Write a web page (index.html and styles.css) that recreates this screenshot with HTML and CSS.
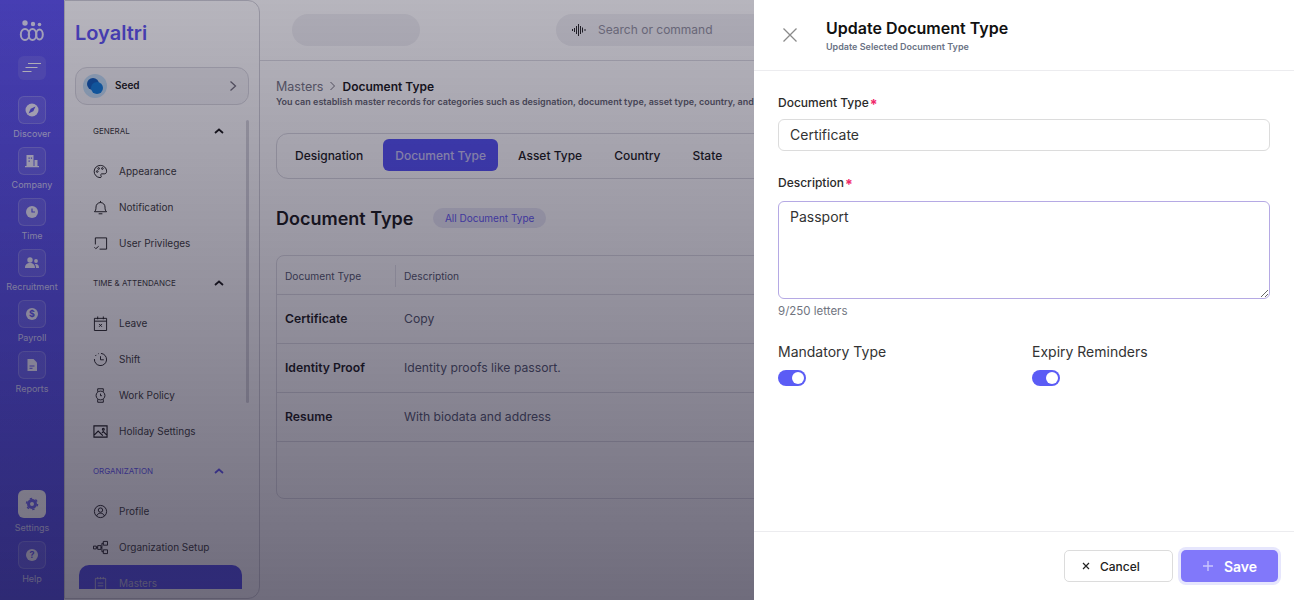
FILE: index.html
```html
<!DOCTYPE html>
<html lang="en">
  <head>
    <meta charset="UTF-8" />
    <meta name="viewport" content="width=device-width, initial-scale=1.0" />
    <title>Loyaltri</title>
    <link rel="stylesheet" href="styles.css">
  </head>
  <body>
    <div class="app">
      <!-- Icon rail -->
      <aside class="rail">
        <svg class="rail-logo" width="26" height="22" viewBox="0 0 26 22" fill="none" stroke="#fff" stroke-width="2">
          <ellipse cx="6" cy="14.5" rx="4.2" ry="5.5"/><ellipse cx="13.5" cy="14.5" rx="3.8" ry="5.5"/><ellipse cx="20.5" cy="14.5" rx="3.3" ry="5"/>
          <circle cx="6" cy="3" r="2.7" fill="#fff" stroke="none"/><circle cx="14" cy="4" r="2.2" fill="#fff" stroke="none"/><circle cx="20.5" cy="4.5" r="1.8" fill="#fff" stroke="none"/>
        </svg>
        <div class="rail-toggle">
          <svg width="20" height="12" viewBox="0 0 20 12" stroke="#fff" stroke-width="1"><path d="M6 1.5h13M3.500 5.500h12M0.500 9.500h9"/></svg>
        </div>
        <a class="rail-item">
          <span class="rail-icon"><svg width="14" height="14" viewBox="0 0 14 14"><circle cx="7" cy="7" r="6.500" fill="#fff"/><path d="M10.500 3.500 8.300 8.300 3.500 10.500 5.700 5.700z" fill="#5a50f0"/></svg></span>
          Discover
        </a>
        <a class="rail-item">
          <span class="rail-icon"><svg width="14" height="14" viewBox="0 0 14 14" fill="#fff"><path d="M1.500 1h7v11h-7zM9.500 6h3v6h-3zM0 12h14v1.300H0z"/><path d="M3.500 3.500h1.300v1.300H3.500zM5.800 3.500h1.300v1.300H5.800zM3.500 6.500h1.300v1.300H3.500z" fill="#5a50f0"/></svg></span>
          Company
        </a>
        <a class="rail-item">
          <span class="rail-icon"><svg width="14" height="14" viewBox="0 0 14 14"><circle cx="7" cy="7" r="6" fill="#fff"/><path d="M7 3.500V7h3" fill="none" stroke="#5a50f0" stroke-width="1.200"/></svg></span>
          Time
        </a>
        <a class="rail-item">
          <span class="rail-icon"><svg width="14" height="14" viewBox="0 0 14 14" fill="#fff"><circle cx="5" cy="4" r="2.700"/><circle cx="11" cy="5" r="1.900"/><path d="M0 12c0-3.500 2-5 5-5s5 1.500 5 5zM10.800 8c2 0 3.200 1 3.200 4h-3c0-1.500-.3-3-1.200-3.700z"/></svg></span>
          Recruitment
        </a>
        <a class="rail-item">
          <span class="rail-icon"><svg width="14" height="14" viewBox="0 0 14 14"><circle cx="7" cy="7" r="6" fill="#fff"/><text x="7" y="10" text-anchor="middle" class="rail-dollar">$</text></svg></span>
          Payroll
        </a>
        <a class="rail-item">
          <span class="rail-icon"><svg width="14" height="14" viewBox="0 0 14 14"><path d="M2.500 1h6l3.500 3.500V13H2.500z" fill="#fff"/><path d="M4.500 8h5M4.500 10.300h3" stroke="#5a50f0" stroke-width="1"/></svg></span>
          Reports
        </a>
        <a class="rail-item rail-settings">
          <span class="rail-icon"><svg width="14" height="14" viewBox="0 0 14 14"><circle cx="7" cy="7" r="3.500" fill="none" stroke="#5a50f0" stroke-width="3"/><circle cx="7" cy="7" r="5.500" fill="none" stroke="#5a50f0" stroke-width="1.500" stroke-dasharray="2.400 3.360"/></svg></span>
          Settings
        </a>
        <a class="rail-item">
          <span class="rail-icon"><svg width="14" height="14" viewBox="0 0 14 14"><circle cx="7" cy="7" r="6" fill="#fff"/><text x="7" y="10" text-anchor="middle" class="rail-dollar">?</text></svg></span>
          Help
        </a>
      </aside>

      <!-- Sidebar -->
      <aside class="sidebar">
        <h1 class="brand">Loyaltri</h1>
        <div class="org-card">
          <span class="org-avatar"><i class="dot-a"></i><i class="dot-b"></i></span>
          <span class="org-name">Seed</span>
          <svg width="8" height="12" viewBox="0 0 8 12" fill="none" stroke="#6f6d78" stroke-width="1.300"><path d="M1.500 1.500 6.500 6l-5 4.500"/></svg>
        </div>
        <div class="menu">
          <div class="menu-scrollbar"></div>
          <div class="menu-head"><span>General</span><svg class="caret" width="10" height="6" viewBox="0 0 10 6" fill="none" stroke="currentColor" stroke-width="1.800"><path d="M1 5l4-3.500L9 5"/></svg></div>
          <a class="menu-item">
            <svg viewBox="0 0 16 16" fill="none" stroke="#111" stroke-width="1"><path d="M8 1.500a6.500 6.500 0 1 0-.5 13c1.500 0 1.600-1.200 1-2-.7-1 0-2 1-2h2.500c1.600 0 2.500-1 2.500-2.700 0-3.500-3-6.300-6.500-6.300z"/><circle cx="4.500" cy="8" r=".9"/><circle cx="6" cy="4.800" r=".9"/><circle cx="10" cy="4.800" r=".9"/></svg>
            Appearance
          </a>
          <a class="menu-item">
            <svg viewBox="0 0 16 16" fill="none" stroke="#111" stroke-width="1"><path d="M1.500 12.500c1.200-1 1.700-2 1.700-5a4.800 4.800 0 0 1 9.600 0c0 3 .5 4 1.700 5zM6 14.700h4M8 1v1.700"/></svg>
            Notification
          </a>
          <a class="menu-item">
            <svg viewBox="0 0 16 16" fill="none" stroke="#111" stroke-width="1"><path d="M2.500 9V2h12v12H7M1.500 12l1.500 1.500L6 11"/></svg>
            User Privileges
          </a>
          <div class="menu-head"><span>Time &amp; Attendance</span><svg class="caret" width="10" height="6" viewBox="0 0 10 6" fill="none" stroke="currentColor" stroke-width="1.800"><path d="M1 5l4-3.500L9 5"/></svg></div>
          <a class="menu-item">
            <svg viewBox="0 0 16 16" fill="none" stroke="#111" stroke-width="1"><path d="M1.500 2.500h13v13h-13zM1.500 5.500h13M5 .5v3M11 .5v3M6.500 8.500l3 3M9.500 8.500l-3 3"/></svg>
            Leave
          </a>
          <a class="menu-item">
            <svg viewBox="0 0 16 16" fill="none" stroke="#111" stroke-width="1"><path d="M8.500 1.500a6.500 6.500 0 1 1-7 6M2.500 4.200l1-1.100M5.300 2l.7-.3M8 4.500v3.800h3.500"/></svg>
            Shift
          </a>
          <a class="menu-item">
            <svg viewBox="0 0 16 16" fill="none" stroke="#111" stroke-width="1"><circle cx="8" cy="8" r="4.700"/><path d="M5 4V.8h6V4M5 12v3.200h6V12M8 6v2.200h1.500"/></svg>
            Work Policy
          </a>
          <a class="menu-item">
            <svg viewBox="0 0 16 16" fill="none" stroke="#111" stroke-width="1.200"><path d="M1 2h14v12H1zM1.500 11.500l4-4 5 5M9.500 9.500 11 8l3.500 3.500"/><circle cx="11" cy="5.500" r="1"/></svg>
            Holiday Settings
          </a>
          <div class="menu-head menu-head-active"><span>Organization</span><svg class="caret" width="10" height="6" viewBox="0 0 10 6" fill="none" stroke="currentColor" stroke-width="1.800"><path d="M1 5l4-3.500L9 5"/></svg></div>
          <a class="menu-item">
            <svg viewBox="0 0 16 16" fill="none" stroke="#111" stroke-width="1"><circle cx="8" cy="8" r="6.500"/><circle cx="8" cy="6.500" r="2.300"/><path d="M3.800 12.800c.6-2 2.300-3 4.200-3s3.600 1 4.200 3"/></svg>
            Profile
          </a>
          <a class="menu-item">
            <svg viewBox="0 0 16 16" fill="none" stroke="#111" stroke-width="1"><path d="M.5 6.500h3v3h-3zM5 6h3.500v4H5zM11 1.500h4.500v4H11zM11 10.500h4.500v4H11zM3.500 8H5M8.500 8h1V3.500H11M9.500 8v4.500H11"/></svg>
            Organization Setup
          </a>
          <a class="menu-item menu-item-active">
            <svg viewBox="0 0 16 16" fill="none" stroke="#b9b6d8" stroke-width="1"><path d="M2.500 2.500h11v12h-11zM5 1v2.500M8 1v2.500M11 1v2.500M5 7.500h6M5 10.500h6"/></svg>
            Masters
          </a>
        </div>
      </aside>

      <!-- Main -->
      <main class="main">
        <div class="topbar">
          <div class="top-pill"></div>
          <div class="search">
            <svg width="14" height="12" viewBox="0 0 14 12" stroke="#222" stroke-width="1" fill="none"><path d="M.5 5v2M2.500 4v4M4.500 2v8M6.500 0v12M8.500 2v8M10.500 3.500v5M13 5v2"/></svg>
            <span>Search or command</span>
          </div>
        </div>
        <div class="content">
          <div class="crumbs">
            <span class="crumb-parent">Masters</span>
            <svg width="7" height="10" viewBox="0 0 7 10" fill="none" stroke="#6f6d78" stroke-width="1"><path d="M1.500 1 5.500 5l-4 4"/></svg>
            <span class="crumb-current">Document Type</span>
          </div>
          <p class="page-sub">You can establish master records for categories such as designation, document type, asset type, country, and state.</p>

          <div class="tabs">
            <a class="tab">Designation</a>
            <a class="tab tab-active">Document Type</a>
            <a class="tab">Asset Type</a>
            <a class="tab">Country</a>
            <a class="tab">State</a>
          </div>

          <div class="section-head">
            <h2>Document Type</h2>
            <span class="chip">All Document Type</span>
          </div>

          <div class="table">
            <div class="row row-head">
              <div class="cell-name">Document Type</div>
              <div class="cell-desc">Description</div>
            </div>
            <div class="row">
              <div class="cell-name">Certificate</div>
              <div class="cell-desc">Copy</div>
            </div>
            <div class="row">
              <div class="cell-name">Identity Proof</div>
              <div class="cell-desc">Identity proofs like passort.</div>
            </div>
            <div class="row">
              <div class="cell-name">Resume</div>
              <div class="cell-desc">With biodata and address</div>
            </div>
          </div>
        </div>
      </main>
    </div>

    <!-- Dim layer under the drawer -->
    <div class="backdrop"></div>

    <!-- Drawer -->
    <section class="drawer">
      <header class="drawer-head">
        <svg class="drawer-close" width="16" height="16" viewBox="0 0 16 16" stroke="#8a8a8a" stroke-width="1.300"><path d="M1.500 1.500l13 13M14.500 1.500l-13 13"/></svg>
        <div>
          <h2>Update Document Type</h2>
          <p>Update Selected Document Type</p>
        </div>
      </header>

      <form class="drawer-body">
        <label class="field-label">Document Type<span class="req">*</span></label>
        <input class="field-input" type="text" value="Certificate" />

        <label class="field-label field-label-second">Description<span class="req">*</span></label>
        <textarea class="field-area">Passport</textarea>
        <div class="counter">9/250 letters</div>

        <div class="switches">
          <div class="switch-col">
            <span>Mandatory Type</span>
            <span class="switch"><i></i></span>
          </div>
          <div class="switch-col">
            <span>Expiry Reminders</span>
            <span class="switch"><i></i></span>
          </div>
        </div>
      </form>

      <footer class="drawer-foot">
        <button class="btn btn-cancel" type="button">
          <svg width="8" height="8" viewBox="0 0 8 8" stroke="#222" stroke-width="1.200"><path d="M1 1l6 6M7 1 1 7"/></svg>
          Cancel
        </button>
        <button class="btn btn-save" type="button">
          <svg width="12" height="12" viewBox="0 0 12 12" stroke="#c9c5fd" stroke-width="1.400"><path d="M6 1v10M1 6h10"/></svg>
          Save
        </button>
      </footer>
    </section>
  </body>
</html>
```

FILE: styles.css
```css
* {
  box-sizing: border-box;
}

html,
body {
  margin: 0;
  height: 600px;
  overflow: hidden;
}

body {
  font-family: Inter, "Liberation Sans", sans-serif;
  color: #111;
  background: #fff;
}

h1,
h2,
p {
  margin: 0;
}

.app {
  display: flex;
  height: 600px;
  background: #fff;
}

/* Icon rail */
.rail {
  width: 64px;
  flex: none;
  display: flex;
  flex-direction: column;
  align-items: center;
  padding-top: 20px;
  color: #fff;
  background: linear-gradient(180deg, #5a50f0, #4c48e8);
}

.rail-logo {
  display: block;
  opacity: 0.85;
}

.rail-toggle {
  width: 28px;
  height: 24px;
  margin: 14px 0 16px;
  border-radius: 6px;
  background: rgba(255, 255, 255, 0.1);
  display: flex;
  align-items: center;
  justify-content: center;
}

.rail-item {
  height: 51px;
  display: flex;
  flex-direction: column;
  align-items: center;
  font-size: 9px;
  line-height: 11px;
  color: rgba(255, 255, 255, 0.75);
  white-space: nowrap;
}

.rail-icon {
  width: 28px;
  height: 28px;
  margin-bottom: 4px;
  border: 1px solid rgba(255, 255, 255, 0.2);
  border-radius: 6px;
  background: rgba(255, 255, 255, 0.1);
  display: flex;
  align-items: center;
  justify-content: center;
}

.rail-icon svg {
  opacity: 0.9;
}

.rail-dollar {
  font-size: 9px;
  font-weight: 700;
  fill: #5a50f0;
}

.rail-settings {
  margin-top: auto;
}

.rail-settings .rail-icon {
  background: #fff;
}

.rail-settings + .rail-item {
  margin-bottom: 8px;
}

/* Sidebar */
.sidebar {
  width: 196px;
  flex: none;
  height: 599px;
  background: #fff;
  border: 1px solid #cfcfd6;
  border-radius: 0 12px 12px 0;
  padding: 19px 10px 9px 10px;
  display: flex;
  flex-direction: column;
}

.brand {
  font-size: 20px;
  line-height: 26px;
  font-weight: 600;
  color: #5a50f0;
}

.org-card {
  margin-top: 21px;
  height: 38px;
  width: 174px;
  flex: none;
  display: flex;
  align-items: center;
  padding: 0 11px 0 7px;
  border: 1px solid #d8d8de;
  border-radius: 12px;
  background: #f6f6f8;
}

.org-avatar {
  position: relative;
  width: 24px;
  height: 24px;
  border-radius: 50%;
  background: #bfdcf2;
}

.org-avatar i {
  position: absolute;
  width: 12px;
  height: 12px;
  border-radius: 50%;
}

.dot-a {
  left: 4px;
  top: 4px;
  background: #0a58b8;
}

.dot-b {
  left: 8px;
  top: 8px;
  background: #0a78d8;
}

.org-name {
  flex: 1;
  margin: 0 0 2px 8px;
  font-size: 10px;
  font-weight: 600;
}

.menu {
  position: relative;
  flex: 1;
  overflow: hidden;
  margin-top: 8px;
  padding: 0 4px;
}

.menu-scrollbar {
  position: absolute;
  right: 0;
  top: 7px;
  width: 3px;
  height: 283px;
  background: #d4d4da;
  border-radius: 2px;
}

.menu-head {
  height: 36px;
  display: flex;
  align-items: center;
  justify-content: space-between;
  padding: 0 21px 0 14px;
  font-size: 8px;
  text-transform: uppercase;
  color: #333;
}

.menu-head-active {
  color: #5a50f0;
}

.caret {
  color: #111;
}

.menu-head-active .caret {
  color: #5a50f0;
}

.menu-item {
  height: 36px;
  display: flex;
  align-items: center;
  gap: 11px;
  padding-left: 14px;
  font-size: 10px;
  color: #333;
}

.menu-item svg {
  width: 15px;
  height: 15px;
  flex: none;
}

.menu-head + .menu-item {
  margin-top: 4px;
}

.menu-item + .menu-head {
  margin-top: 4px;
}

.menu-item-active {
  width: 163px;
  border-radius: 10px;
  background: #4c48e8;
  color: #b9b6d8;
}

/* Main */
.main {
  flex: 1;
  min-width: 0;
  background: #fff;
  overflow: hidden;
}

.topbar {
  height: 61px;
  display: flex;
  align-items: center;
  gap: 136px;
  padding: 0 0 1px 32px;
  border-bottom: 1px solid #dcdce2;
}

.top-pill {
  width: 128px;
  height: 32px;
  flex: none;
  border-radius: 16px;
  background: #f0f0f3;
}

.search {
  width: 400px;
  height: 32px;
  flex: none;
  display: flex;
  align-items: center;
  gap: 12px;
  padding-left: 16px;
  border-radius: 16px;
  background: #f0f0f3;
  font-size: 12px;
  color: #8f8f9b;
}

.content {
  padding: 17px 0 0 16px;
}

.crumbs {
  display: flex;
  align-items: center;
  gap: 6px;
  height: 16px;
  font-size: 12.500px;
  white-space: nowrap;
}

.crumb-parent {
  color: #71717d;
}

.crumb-current {
  font-size: 12px;
  font-weight: 600;
}

.page-sub {
  margin-top: 1px;
  font-size: 9px;
  line-height: 14px;
  font-weight: 600;
  color: #60606c;
  white-space: nowrap;
}

.tabs {
  margin-top: 24px;
  width: 700px;
  height: 46px;
  display: flex;
  align-items: center;
  gap: 8px;
  padding: 0 6px 2px 6px;
  border: 1px solid #d8d8de;
  border-radius: 12px;
}

.tab {
  height: 32px;
  display: flex;
  align-items: center;
  padding: 0 12px;
  border-radius: 6px;
  font-size: 12px;
  font-weight: 500;
}

.tab-active {
  background: #4f4cf5;
  color: #c8c4f5;
}

.section-head {
  margin-top: 29px;
  height: 20px;
  display: flex;
  align-items: center;
  gap: 20px;
}

.section-head h2 {
  font-size: 18px;
  font-weight: 600;
}

.chip {
  height: 20px;
  display: flex;
  align-items: center;
  padding: 0 11.500px;
  border-radius: 10px;
  background: #e8e8f4;
  font-size: 10px;
  color: #5a50f0;
}

.table {
  margin-top: 27px;
  width: 700px;
  height: 244px;
  border: 1px solid #dcdce2;
  border-radius: 8px;
}

.row {
  height: 49px;
  display: flex;
  align-items: center;
  padding-bottom: 2px;
  border-bottom: 1px solid #dcdce2;
  font-size: 12.200px;
}

.row-head {
  height: 39px;
  padding: 2px 0 0;
  font-size: 10.200px;
}

.cell-name {
  width: 119px;
  padding-left: 8px;
  font-weight: 600;
}

.cell-desc {
  padding-left: 8px;
  color: #4b5066;
}

.row-head .cell-name {
  font-weight: 400;
  color: #4b5066;
  border-right: 1px solid #e3e3e8;
  line-height: 22px;
}

/* Dim layer */
.backdrop {
  position: fixed;
  inset: 0;
  background: linear-gradient(180deg, rgba(30, 25, 50, 0.32), rgba(30, 25, 50, 0.64));
}

/* Drawer */
.drawer {
  position: fixed;
  top: 0;
  right: 0;
  width: 540px;
  height: 600px;
  background: #fff;
  display: flex;
  flex-direction: column;
}

.drawer-head {
  height: 71px;
  flex: none;
  display: flex;
  align-items: center;
  gap: 28px;
  padding: 0 0 0 28px;
  border-bottom: 1px solid #ececef;
}

.drawer-head h2 {
  font-size: 16px;
  line-height: 20px;
  font-weight: 600;
}

.drawer-head p {
  margin-top: 3px;
  font-size: 9px;
  line-height: 12px;
  font-weight: 600;
  color: #6b7385;
}

.drawer-body {
  flex: 1;
  padding: 25px 24px 0;
}

.field-label {
  display: block;
  height: 14px;
  font-size: 12px;
  line-height: 14px;
  font-weight: 500;
  color: #2a2a2a;
}

.field-label-second {
  margin-top: 25px;
}

.req {
  margin-left: 1px;
  font-size: 14px;
  font-weight: 700;
  vertical-align: -3px;
  line-height: 0;
  color: #f0286a;
}

.field-input,
.field-area {
  display: block;
  width: 492px;
  border: 1px solid #dcdcdc;
  border-radius: 6px;
  padding: 0 11px;
  font-family: inherit;
  font-size: 14px;
  color: #333;
  outline: none;
}

.field-input {
  margin-top: 9px;
  height: 32px;
  padding-bottom: 2px;
}

.field-area {
  margin-top: 11px;
  height: 98px;
  padding-top: 6px;
  border-color: #b5a9e4;
  line-height: 17px;
}

.counter {
  margin-top: 5px;
  font-size: 11.500px;
  line-height: 14px;
  color: #71757f;
}

.switches {
  margin-top: 26px;
  display: flex;
}

.switch-col {
  width: 254px;
  flex: none;
  display: flex;
  flex-direction: column;
  align-items: flex-start;
  gap: 10px;
  font-size: 14px;
  line-height: 16px;
  color: #333;
}

.switch {
  width: 28px;
  height: 16px;
  display: flex;
  justify-content: flex-end;
  align-items: center;
  padding-right: 2px;
  border-radius: 8px;
  background: #5b5cf5;
}

.switch i {
  width: 12px;
  height: 12px;
  border-radius: 50%;
  background: #fff;
}

.drawer-foot {
  height: 69px;
  flex: none;
  display: flex;
  justify-content: flex-end;
  align-items: flex-start;
  gap: 8px;
  padding: 18px 16px 0 0;
  border-top: 1px solid #ececef;
}

.btn {
  height: 32px;
  display: flex;
  align-items: center;
  border-radius: 5px;
  font-family: inherit;
  cursor: pointer;
}

.btn-cancel {
  width: 109px;
  gap: 10px;
  padding: 0 0 0 17px;
  border: 1px solid #dcdcdc;
  background: #fff;
  font-size: 12px;
  font-weight: 500;
  color: #222;
}

.btn-save {
  width: 97px;
  gap: 10px;
  justify-content: center;
  border: 0;
  background: #8178fa;
  box-shadow: 0 0 0 3px #e6e6fd;
  font-size: 14px;
  font-weight: 600;
  color: #fff;
}
```
